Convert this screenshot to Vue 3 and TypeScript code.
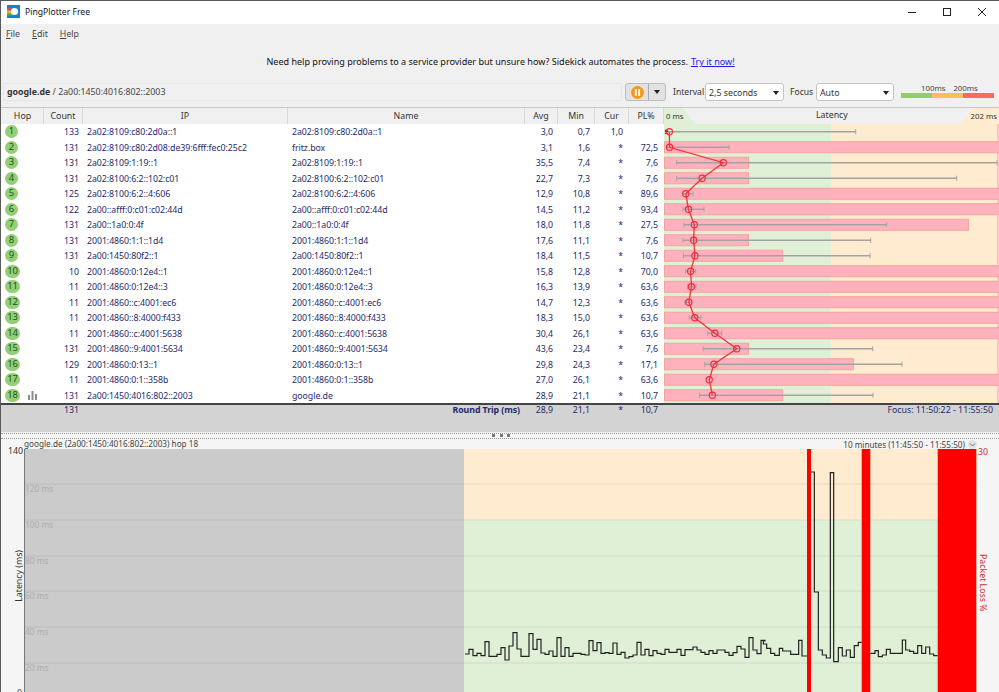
<template>
  <div class="app">
    <header class="titlebar">
      <svg class="app-icon" width="13" height="13" viewBox="0 0 13 13" aria-hidden="true">
        <rect width="13" height="13" fill="#1b7fc4" />
        <rect y="3" width="5" height="2.5" fill="#e5502e" />
        <rect y="5.5" width="5" height="2.5" fill="#f4b02e" />
        <rect y="8" width="5" height="2.5" fill="#57b04a" />
        <circle cx="7.5" cy="6.5" r="3.6" fill="#fff" />
      </svg>
      <span class="app-name">PingPlotter Free</span>
      <div class="win-controls">
        <svg width="10" height="10" viewBox="0 0 10 10" aria-hidden="true"><path d="M1 5.5h8" stroke="#222" fill="none" /></svg>
        <svg width="10" height="10" viewBox="0 0 10 10" aria-hidden="true"><rect x="1.5" y="1.5" width="7" height="7" stroke="#222" fill="none" /></svg>
        <svg width="10" height="10" viewBox="0 0 10 10" aria-hidden="true"><path d="M1 1l8 8M9 1l-8 8" stroke="#222" fill="none" /></svg>
      </div>
    </header>

    <nav class="menubar">
      <span><u>F</u>ile</span>
      <span><u>E</u>dit</span>
      <span><u>H</u>elp</span>
    </nav>

    <div class="banner">
      Need help proving problems to a service provider but unsure how? Sidekick automates the process.
      <a class="banner-link" href="#">Try it now!</a>
    </div>

    <div class="toolbar">
      <div class="crumb"><b>google.de</b> / 2a00:1450:4016:802::2003</div>
      <div class="pause-group">
        <span class="pause-btn">
          <svg width="13" height="13" viewBox="0 0 14 14" aria-hidden="true">
            <circle cx="7" cy="7" r="7" fill="#f59a16" />
            <rect x="4.2" y="3.5" width="2" height="7" fill="#fff" />
            <rect x="7.8" y="3.5" width="2" height="7" fill="#fff" />
          </svg>
        </span>
        <span class="pause-arrow"><i class="caret"></i></span>
      </div>
      <span class="field-label interval-label">Interval</span>
      <div class="select interval-select">2,5 seconds<i class="caret"></i></div>
      <span class="field-label focus-label">Focus</span>
      <div class="select focus-select">Auto<i class="caret"></i></div>
      <div class="legend">
        <div class="legend-labels"><span>100ms</span><span>200ms</span></div>
        <div class="legend-bar"><i class="lg-green"></i><i class="lg-orange"></i><i class="lg-red"></i></div>
      </div>
    </div>

    <section class="table">
      <div class="thead">
        <div class="th">Hop</div>
        <div class="th">Count</div>
        <div class="th">IP</div>
        <div class="th">Name</div>
        <div class="th">Avg</div>
        <div class="th">Min</div>
        <div class="th">Cur</div>
        <div class="th">PL%</div>
        <div class="th-latency">
          <svg class="lat-head" width="335" height="16" aria-hidden="true">
            <polygon points="0,0 19,0 31,16 0,16" fill="#e0f0d6" />
            <polygon points="309,0 335,0 335,16 297,16" fill="#ffebcf" />
          </svg>
          <span class="lat-min">0 ms</span>
          <span class="lat-title">Latency</span>
          <span class="lat-max">202 ms</span>
        </div>
      </div>

      <div class="tbody">
        <div class="rows">
          <div v-for="r in hops" :key="r.hop" class="row">
            <div class="cell hop-cell">
              <span class="hop-badge" :class="{ wide: r.hop > 9 }">{{ r.hop }}</span>
              <svg v-if="r.hop === 18" class="hop-graph" width="9" height="9" viewBox="0 0 9 9" aria-hidden="true">
                <rect x="0" y="4" width="2" height="5" fill="#8a8a8a" />
                <rect x="3.5" y="0" width="2" height="9" fill="#8a8a8a" />
                <rect x="7" y="3" width="2" height="6" fill="#8a8a8a" />
              </svg>
            </div>
            <div class="cell num count-cell">{{ r.count }}</div>
            <div class="cell text">{{ r.ip }}</div>
            <div class="cell text">{{ r.name }}</div>
            <div class="cell num">{{ r.avg }}</div>
            <div class="cell num">{{ r.min }}</div>
            <div class="cell num wide-pad">{{ r.cur }}</div>
            <div class="cell num wide-pad">{{ r.pl }}</div>
          </div>
        </div>
        <svg class="plot" width="335" height="279" aria-hidden="true">
          <rect x="0" y="0" width="167" height="279" fill="#e0f0d6" />
          <rect x="167" y="0" width="166" height="279" fill="#ffebcf" />
          <rect x="333" y="0" width="2" height="279" fill="#ffc4c4" />
          <template v-for="(r, i) in hops" :key="r.hop">
            <rect
              v-if="r.pl"
              x="0.5"
              :y="rowY(i) - 5.5"
              :width="plWidth(r.pl)"
              height="11"
              fill="#ffb2be"
              stroke="#f4a39c"
            />
          </template>
          <template v-for="(r, i) in hops" :key="'w' + r.hop">
            <g v-if="r.max" stroke="#a3a3a3" fill="none">
              <path :d="`M${msX(r.min)} ${rowY(i)}H${r.max - 664}`" stroke-width="1.4" />
              <path :d="`M${msX(r.min)} ${rowY(i) - 2.5}v5M${r.max - 664} ${rowY(i) - 2.5}v5`" />
            </g>
          </template>
          <path d="M1 6.5l3 3M4 6.5l-3 3" stroke="#2222cc" stroke-width="1.2" fill="none" />
          <polyline :points="avgPoints" fill="none" stroke="#f2343c" stroke-width="1.3" />
          <circle
            v-for="(r, i) in hops"
            :key="'c' + r.hop"
            :cx="msX(r.avg)"
            :cy="rowY(i)"
            r="3.1"
            fill="none"
            stroke="#f2283a"
            stroke-width="1.1"
          />
        </svg>
      </div>

      <div class="summary">
        <div class="cell"></div>
        <div class="cell num count-cell">131</div>
        <div class="cell"></div>
        <div class="cell num roundtrip">Round Trip (ms)</div>
        <div class="cell num">28,9</div>
        <div class="cell num">21,1</div>
        <div class="cell num wide-pad">*</div>
        <div class="cell num wide-pad">10,7</div>
        <div class="focus-range">Focus: 11:50:22 - 11:55:50</div>
      </div>
    </section>

    <div class="splitter"><div class="grip"><i></i><i></i><i></i></div></div>

    <section class="graph">
      <div class="graph-head">
        <span>google.de (2a00:1450:4016:802::2003) hop 18</span>
        <span class="graph-range">10 minutes (11:45:50 - 11:55:50)
          <svg class="range-toggle" width="9" height="9" viewBox="0 0 9 9" aria-hidden="true">
            <circle cx="4.5" cy="4.5" r="4.5" fill="#e2e2e2" />
            <path d="M2 3.5l2.5 2.5 2.5-2.5" stroke="#777" fill="none" />
          </svg>
        </span>
      </div>
      <div class="graph-body">
        <div class="axis-left">
          <span class="axis-top">140</span>
          <span class="axis-title">Latency (ms)</span>
          <span class="axis-zero">0</span>
        </div>
        <div class="canvas">
          <svg width="952" height="243" aria-hidden="true">
            <rect x="0" y="0" width="952" height="243" fill="#e0f0d6" />
            <rect x="0" y="0" width="952" height="71" fill="#ffebcf" />
            <rect x="0" y="0" width="439" height="243" fill="#cbcbcb" />
            <path
              v-for="y in gridLines"
              :key="y"
              :d="`M0 ${y}H952`"
              stroke="#777"
              stroke-opacity="0.16"
              stroke-width="1.2"
              fill="none"
            />
            <path :d="tracePath" fill="none" stroke="#222" stroke-width="1.2" />
            <rect x="782" y="0" width="4" height="243" fill="#ff0000" />
            <rect x="836.7" y="0" width="8.6" height="243" fill="#ff0000" />
            <rect x="912.7" y="0" width="38.6" height="243" fill="#ff0000" />
          </svg>
          <span
            v-for="(t, i) in gridLabels"
            :key="t"
            class="grid-label"
            :style="{ top: gridLines[i] - 1 + 'px' }"
          >{{ t }}</span>
        </div>
        <div class="axis-right">
          <span class="axis-top-r">30</span>
          <span class="axis-title-r">Packet Loss %</span>
        </div>
      </div>
    </section>
  </div>
</template>

<script setup lang="ts">
import { computed } from 'vue';

type Hop = {
  hop: number;
  count: number;
  ip: string;
  name: string;
  avg: string;
  min: string;
  cur: string;
  pl: string;
  max: number;
};

const hops: Hop[] = [
  { hop: 1, count: 133, ip: '2a02:8109:c80:2d0a::1', name: '2a02:8109:c80:2d0a::1', avg: '3,0', min: '0,7', cur: '1,0', pl: '', max: 855.7 },
  { hop: 2, count: 131, ip: '2a02:8109:c80:2d08:de39:6fff:fec0:25c2', name: 'fritz.box', avg: '3,1', min: '1,6', cur: '*', pl: '72,5', max: 729 },
  { hop: 3, count: 131, ip: '2a02:8109:1:19::1', name: '2a02:8109:1:19::1', avg: '35,5', min: '7,4', cur: '*', pl: '7,6', max: 997 },
  { hop: 4, count: 131, ip: '2a02:8100:6:2::102:c01', name: '2a02:8100:6:2::102:c01', avg: '22,7', min: '7,3', cur: '*', pl: '7,6', max: 956.7 },
  { hop: 5, count: 125, ip: '2a02:8100:6:2::4:606', name: '2a02:8100:6:2::4:606', avg: '12,9', min: '10,8', cur: '*', pl: '89,6', max: 693 },
  { hop: 6, count: 122, ip: '2a00::afff:0:c01:c02:44d', name: '2a00::afff:0:c01:c02:44d', avg: '14,5', min: '11,2', cur: '*', pl: '93,4', max: 704 },
  { hop: 7, count: 131, ip: '2a00::1a0:0:4f', name: '2a00::1a0:0:4f', avg: '18,0', min: '11,8', cur: '*', pl: '27,5', max: 886.7 },
  { hop: 8, count: 131, ip: '2001:4860:1:1::1d4', name: '2001:4860:1:1::1d4', avg: '17,6', min: '11,1', cur: '*', pl: '7,6', max: 870.7 },
  { hop: 9, count: 131, ip: '2a00:1450:80f2::1', name: '2a00:1450:80f2::1', avg: '18,4', min: '11,5', cur: '*', pl: '10,7', max: 870 },
  { hop: 10, count: 10, ip: '2001:4860:0:12e4::1', name: '2001:4860:0:12e4::1', avg: '15,8', min: '12,8', cur: '*', pl: '70,0', max: 695.7 },
  { hop: 11, count: 11, ip: '2001:4860:0:12e4::3', name: '2001:4860:0:12e4::3', avg: '16,3', min: '13,9', cur: '*', pl: '63,6', max: 696 },
  { hop: 12, count: 11, ip: '2001:4860::c:4001:ec6', name: '2001:4860::c:4001:ec6', avg: '14,7', min: '12,3', cur: '*', pl: '63,6', max: 691.7 },
  { hop: 13, count: 11, ip: '2001:4860::8:4000:f433', name: '2001:4860::8:4000:f433', avg: '18,3', min: '15,0', cur: '*', pl: '63,6', max: 701 },
  { hop: 14, count: 11, ip: '2001:4860::c:4001:5638', name: '2001:4860::c:4001:5638', avg: '30,4', min: '26,1', cur: '*', pl: '63,6', max: 721.7 },
  { hop: 15, count: 131, ip: '2001:4860::9:4001:5634', name: '2001:4860::9:4001:5634', avg: '43,6', min: '23,4', cur: '*', pl: '7,6', max: 872.7 },
  { hop: 16, count: 129, ip: '2001:4860:0:13::1', name: '2001:4860:0:13::1', avg: '29,8', min: '24,3', cur: '*', pl: '17,1', max: 902 },
  { hop: 17, count: 11, ip: '2001:4860:0:1::358b', name: '2001:4860:0:1::358b', avg: '27,0', min: '26,1', cur: '*', pl: '63,6', max: 0 },
  { hop: 18, count: 131, ip: '2a00:1450:4016:802::2003', name: 'google.de', avg: '28,9', min: '21,1', cur: '*', pl: '10,7', max: 873 },
];

const ROW_H = 15.5;

function rowY(i: number) {
  return ROW_H * i + ROW_H / 2;
}

function toNum(s: string) {
  return parseFloat(s.replace(',', '.'));
}

function msX(s: string) {
  return 0.4 + 1.66 * toNum(s);
}

function plWidth(s: string) {
  return Math.min(toNum(s) * 11.05, 340);
}

const avgPoints = computed(() => hops.map((r, i) => `${msX(r.avg)},${rowY(i)}`).join(' '));

const gridLines = [35, 71, 107, 142, 178, 214];
const gridLabels = ['120 ms', '100 ms', '80 ms', '60 ms', '40 ms', '20 ms'];

// samples read off the chart, each y holds until the next x
const traceA = [282, 268, 287, 280, 287, 245, 289, 289, 283, 263, 300, 258, 218, 267, 289, 289, 221, 268, 238, 279, 283, 273, 289, 233, 289, 263, 289, 280, 280, 283, 285, 242, 272, 248, 280, 278, 280, 249, 283, 277, 294, 290, 285, 247, 285, 268, 287, 272, 280, 283, 268, 277, 277, 268, 286, 269, 269, 261, 270, 277, 283, 272, 280, 270, 270, 277, 286, 278, 259, 267, 292, 233, 270, 281, 241];
const traceB: [number, number][] = [[10, 603], [20, 612], [32, 625], [44, 640], [58, 646], [68, 625], [92, 633], [116, 643], [126, 601], [141, 648]];
const traceC: [number, number][] = [[163, 96], [175, 456], [187, 630], [199, 645], [211, 654], [221, 98], [235, 665], [247, 623], [259, 648], [271, 630], [283, 652], [295, 617], [305, 607]];
const traceD: [number, number][] = [[345, 640], [355, 632], [367, 650], [379, 645], [391, 628], [427, 640], [437, 600], [449, 630], [461, 634], [473, 640], [485, 617], [497, 640], [509, 621], [521, 642], [533, 647]];

const CANVAS_X = 25;
const CANVAS_Y = 449;

function stepPath(start: number, pts: [number, number][]) {
  let d = `M${start} ${pts[0][1]}`;
  for (const [x, y] of pts) d += `V${y}H${x}`;
  return d;
}

function zoomed(startZ: number, pts: [number, number][]) {
  const out = pts.map(([x, y]) => [760 + x / 3 - CANVAS_X, 440 + y / 3 - CANVAS_Y] as [number, number]);
  return stepPath(760 + startZ / 3 - CANVAS_X, out);
}

const tracePath = computed(() => {
  const first: [number, number][] = traceA.map((y, i) => [460 + (15 + 12 * (i + 1)) / 3 - CANVAS_X, 560 + y / 3 - CANVAS_Y]);
  const a = stepPath(460 + 15 / 3 - CANVAS_X, first);
  const b = zoomed(0, traceB).replace(/^M[^V]*/, '');
  return `${a}${b} ${zoomed(153, traceC)} ${zoomed(331, traceD)}`;
});
</script>

<style>
html,
body {
  margin: 0;
  background: #f0f0f0;
}
</style>

<style scoped>
.app {
  width: 999px;
  height: 692px;
  overflow: hidden;
  display: flex;
  flex-direction: column;
  box-sizing: border-box;
  background: #f0f0f0;
  border-left: 1px solid #5a5a5a;
  border-top: 1px solid #5a5a5a;
  font-family: "Noto Sans", sans-serif;
  font-size: 8.8px;
  color: #222;
}

.titlebar {
  height: 23px;
  flex: none;
  box-sizing: border-box;
  display: flex;
  align-items: center;
  padding: 0 0 2px 6px;
  background: #fff;
}

.app-icon {
  margin-right: 5px;
}

.app-name {
  font-size: 8.6px;
  color: #111;
}

.win-controls {
  margin-left: auto;
  display: flex;
  gap: 25px;
  padding-right: 12px;
}

.menubar {
  height: 18px;
  flex: none;
  box-sizing: border-box;
  padding: 1px 0 0 5px;
  display: flex;
  align-items: center;
  gap: 12px;
  color: #444;
}

.banner {
  height: 41px;
  flex: none;
  box-sizing: border-box;
  padding: 0 0 2px 1px;
  display: flex;
  align-items: center;
  justify-content: center;
  gap: 3px;
  color: #111;
  font-size: 9.05px;
}

.banner-link {
  color: #1a1aee;
  text-decoration: underline;
}

.toolbar {
  height: 24px;
  flex: none;
  display: flex;
  align-items: flex-start;
}

.toolbar > * {
  flex: none;
}

.crumb {
  width: 619px;
  height: 18px;
  box-sizing: border-box;
  margin-left: 2px;
  padding-left: 3px;
  line-height: 17px;
  border: 1px solid #e6e6e6;
  color: #444;
}

.crumb b {
  color: #333;
}

.pause-group {
  margin-left: 3px;
  height: 18px;
  width: 41px;
  display: flex;
  box-sizing: border-box;
  border: 1px solid #bdbdbd;
  border-radius: 3px;
  background: #e2e2e2;
}

.pause-btn {
  flex: 1;
  display: flex;
  align-items: center;
  justify-content: center;
}

.pause-arrow {
  width: 16px;
  display: flex;
  align-items: center;
  justify-content: center;
  border-left: 1px solid #a8a8a8;
}

.caret {
  display: inline-block;
  width: 0;
  height: 0;
  border-left: 3.5px solid transparent;
  border-right: 3.5px solid transparent;
  border-top: 4px solid #222;
}

.field-label {
  line-height: 18px;
  color: #333;
  font-size: 8.6px;
}

.interval-label {
  margin-left: 7px;
  width: 32px;
}

.focus-label {
  margin-left: 6px;
  width: 26px;
}

.select {
  height: 18px;
  box-sizing: border-box;
  display: flex;
  align-items: center;
  justify-content: space-between;
  padding: 1px 4px 0 3px;
  background: #fff;
  border: 1px solid #c4c4c4;
  border-radius: 3px;
  color: #333;
}

.interval-select {
  width: 79px;
}

.focus-select {
  width: 78px;
}

.legend {
  width: 93px;
  margin-left: 7px;
}

.legend-labels {
  display: flex;
  gap: 8px;
  padding-left: 20px;
  height: 10px;
  line-height: 10px;
  font-size: 7.8px;
  color: #444;
}

.legend-bar {
  display: flex;
  height: 5px;
}

.legend-bar i {
  flex: 1;
}

.lg-green {
  background: #92cd6c;
}

.lg-orange {
  background: #ffbd57;
}

.lg-red {
  background: #fb6a5a;
}

.table {
  flex: none;
  display: flex;
  flex-direction: column;
  border-top: 1px solid #c8c8c8;
}

.thead,
.summary,
.row {
  display: grid;
  grid-template-columns: 42px 39px 205px 237px 33px 37px 34px 35px;
  padding-left: 1px;
}

.thead {
  grid-template-columns: 42px 39px 205px 237px 33px 37px 34px 35px 335px;
  height: 16px;
  background: #f0f0f0;
}

.th {
  text-align: center;
  line-height: 16px;
  color: #333;
  border-right: 1px solid #d9d9d9;
  border-bottom: 1px solid #d9d9d9;
}

.th-latency {
  position: relative;
  height: 16px;
  color: #333;
}

.lat-head {
  display: block;
}

.lat-min,
.lat-max,
.lat-title {
  position: absolute;
  top: 0;
  line-height: 16px;
}

.lat-title {
  left: 152px;
  line-height: 14px;
}

.lat-min {
  left: 2px;
  font-size: 7.8px;
}

.lat-max {
  right: 2px;
  font-size: 7.8px;
}

.tbody {
  display: flex;
  height: 279px;
  background: #fff;
}

.rows {
  width: 663px;
  flex: none;
}

.row {
  height: 15.5px;
}

.plot {
  flex: none;
  display: block;
}

.cell {
  height: 15.5px;
  line-height: 16.5px;
  color: #1f2a6b;
  letter-spacing: -0.07px;
  white-space: nowrap;
  overflow: hidden;
}

.text {
  padding-left: 4px;
}

.num {
  text-align: right;
  padding-right: 5px;
}

.count-cell {
  padding-right: 4px;
}

.wide-pad {
  padding-right: 6px;
}

.hop-cell {
  display: flex;
  align-items: center;
  padding-left: 3px;
}

.hop-badge {
  width: 13px;
  height: 13px;
  border-radius: 7px;
  background: #93cf75;
  color: #23551f;
  text-align: center;
  line-height: 12px;
  font-size: 9.5px;
}

.hop-badge.wide {
  width: 15px;
}

.hop-graph {
  margin-left: 8px;
}

.summary {
  grid-template-columns: 42px 39px 205px 237px 33px 37px 34px 35px 335px;
  height: 29px;
  background: #d3d3d3;
  border-top: 2px solid #444;
  box-sizing: border-box;
}

.summary .cell {
  line-height: 11px;
}

.roundtrip {
  font-weight: 700;
}

.focus-range {
  text-align: right;
  padding-right: 6px;
  line-height: 11px;
  color: #1f2a6b;
}

.splitter {
  height: 7px;
  flex: none;
  position: relative;
  box-sizing: border-box;
  margin-top: 1px;
  height: 6px;
  border-top: 1px dotted #999;
  border-bottom: 1px dotted #999;
  background: #f5f5f5;
}

.grip {
  position: absolute;
  left: 491px;
  top: 0;
  display: flex;
  gap: 4.5px;
}

.grip i {
  width: 3px;
  height: 3px;
  background: #777;
}

.graph {
  flex: 1;
  min-height: 0;
  background: #f5f5f5;
  display: flex;
  flex-direction: column;
  color: #444;
}

.graph-head {
  height: 10px;
  flex: none;
  display: flex;
  justify-content: space-between;
  padding: 0 22px 0 23px;
  line-height: 9px;
  font-size: 8.2px;
}

.graph-range {
  display: flex;
  gap: 3px;
  align-items: center;
}

.graph-body {
  flex: 1;
  min-height: 0;
  display: flex;
}

.axis-left {
  width: 23px;
  flex: none;
  position: relative;
}

.axis-top {
  position: absolute;
  top: -4.5px;
  right: 1px;
  color: #333;
}

.axis-zero {
  position: absolute;
  top: 238px;
  right: 2px;
}

.axis-title {
  position: absolute;
  left: 12px;
  top: 101px;
  writing-mode: vertical-rl;
  transform: rotate(180deg);
  white-space: nowrap;
  color: #333;
}

.canvas {
  width: 952px;
  flex: none;
  position: relative;
  overflow: hidden;
  border-left: 1px solid #777;
}

.canvas svg {
  display: block;
}

.grid-label {
  position: absolute;
  left: 0;
  color: #adadad;
  line-height: 11px;
  font-size: 8.3px;
}

.axis-right {
  flex: 1;
  position: relative;
  color: #c33;
}

.axis-top-r {
  position: absolute;
  top: -3px;
  left: 1px;
}

.axis-title-r {
  position: absolute;
  left: 0;
  top: 105px;
  writing-mode: vertical-rl;
  white-space: nowrap;
}
</style>
